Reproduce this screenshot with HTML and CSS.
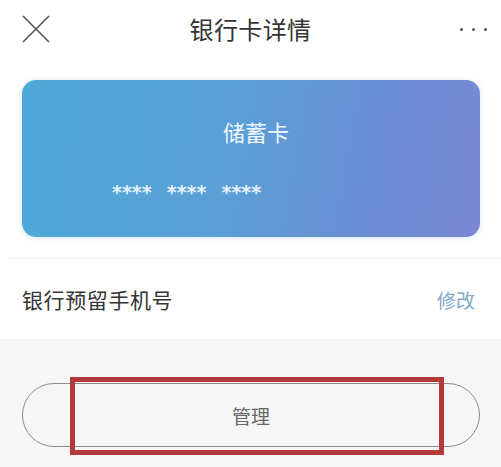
FILE: index.html
```html
<!DOCTYPE html>
<html lang="zh">
<head>
<meta charset="utf-8">
<link rel="stylesheet" href="styles.css">
</head>
<body>
<div class="page">
  <header class="topbar">
    <svg class="close" width="28" height="28" viewBox="0 0 28 28"><path d="M1 1 L27 27 M27 1 L1 27" stroke="#555" stroke-width="1.6" fill="none"/></svg>
    <div class="title">银行卡详情</div>
    <div class="more"><span></span><span></span><span></span></div>
  </header>
  <section class="card-wrap">
    <div class="card">
      <div class="card-type">储蓄卡</div>
      <div class="card-no"><span>****</span><span>****</span><span>****</span></div>
    </div>
  </section>
  <div class="divider"></div>
  <div class="row">
    <span class="label">银行预留手机号</span>
    <span class="link">修改</span>
  </div>
  <section class="bottom">
    <div class="btn">管理<div class="highlight"></div></div>
  </section>
</div>
</body>
</html>
```
FILE: styles.css
```css
* { box-sizing: border-box; }
html, body { margin: 0; padding: 0; background: #fff; }
body { font-family: "Noto Sans CJK SC", "Noto Sans", sans-serif; }
.page { width: 501px; height: 467px; overflow: hidden; display: flex; flex-direction: column; }
.topbar { height: 58px; display: flex; align-items: center; justify-content: space-between; padding: 0 14px 0 22px; position: relative; }
.close { width: 28px; height: 28px; margin-top: 0; }
.title { position: absolute; left: 0; right: 0; text-align: center; font-size: 24px; color: #333; line-height: 58px; pointer-events: none; letter-spacing: 0.4px; }
.more { display: flex; gap: 9px; align-items: center; }
.more span { width: 3px; height: 3px; border-radius: 50%; background: #555; }
.card-wrap { padding: 22px 21px 0 22px; }
.card { height: 157px; border-radius: 14px; background: linear-gradient(100deg, #4ea9d9 0%, #5a9fd6 45%, #6a8ed5 75%, #7a87d3 100%); box-shadow: 0 1px 6px rgba(120,170,220,0.25); display: flex; flex-direction: column; }
.card-type { text-align: center; color: #eef6ff; font-size: 22px; line-height: 28px; margin-top: 37px; padding-left: 10px; }
.card-no { display: flex; gap: 15px; padding-left: 90px; margin-top: 37px; color: #e6f3ff; font-family: "DejaVu Sans", sans-serif; font-size: 19px; line-height: 20px; font-weight: bold; letter-spacing: 0; }
.divider { margin: 21px 0 0 8px; height: 1px; background: #eef0f2; }
.row { height: 80px; display: flex; align-items: center; justify-content: space-between; padding: 0 26px 0 22px; }
.label { font-size: 21px; color: #333; letter-spacing: 0.6px; }
.link { font-size: 19px; color: #82a7c8; }
.bottom { flex: 1; background: #f6f6f7; padding: 44px 21px 0 22px; }
.btn { position: relative; height: 64px; border: 1.5px solid #8c8c8c; border-radius: 32px; display: flex; align-items: center; justify-content: center; font-size: 19px; color: #666; }
.highlight { position: absolute; left: 47px; top: -7px; width: 374px; height: 78px; border: 5px solid #b4393a; }
```
